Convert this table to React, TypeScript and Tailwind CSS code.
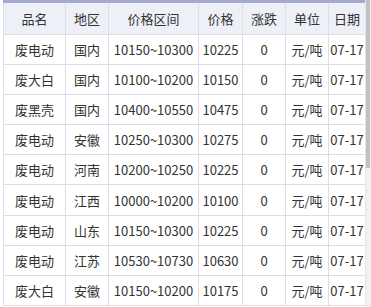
import React from 'react';

const cols = [
  { key: 'name', label: '品名', w: 'w-[62px]' },
  { key: 'area', label: '地区', w: 'w-[43px]' },
  { key: 'range', label: '价格区间', w: 'w-[90px]' },
  { key: 'price', label: '价格', w: 'w-[44px]' },
  { key: 'change', label: '涨跌', w: 'w-[43px]' },
  { key: 'unit', label: '单位', w: 'w-[43px]' },
  { key: 'date', label: '日期', w: 'w-[37px]' },
];

const rows = [
  ['废电动', '国内', '10150~10300', '10225', '0', '元/吨', '07-17'],
  ['废大白', '国内', '10100~10200', '10150', '0', '元/吨', '07-17'],
  ['废黑壳', '国内', '10400~10550', '10475', '0', '元/吨', '07-17'],
  ['废电动', '安徽', '10250~10300', '10275', '0', '元/吨', '07-17'],
  ['废电动', '河南', '10200~10250', '10225', '0', '元/吨', '07-17'],
  ['废电动', '江西', '10000~10200', '10100', '0', '元/吨', '07-17'],
  ['废电动', '山东', '10150~10300', '10225', '0', '元/吨', '07-17'],
  ['废电动', '江苏', '10530~10730', '10630', '0', '元/吨', '07-17'],
  ['废大白', '安徽', '10150~10200', '10175', '0', '元/吨', '07-17'],
];

export default function App() {
  return (
    <div
      className="flex w-[371px] h-[307px] overflow-hidden bg-white text-[13px] text-[#333]"
      style={{ fontFamily: '"Noto Sans CJK SC", "Noto Sans", sans-serif' }}
    >
      <div className="w-[365px] pl-[3px] shrink-0">
        <div className="border-t-[3px] border-[#a5aad4]">
          <table className="table-fixed border-collapse w-[362px]">
            <thead>
              <tr className="bg-[#eef0f8] h-[31px]">
                {cols.map((c) => (
                  <th
                    key={c.key}
                    className={`${c.w} border border-t-0 border-[#dcdde9] font-normal text-center p-0 leading-none`}
                  >
                    {c.label}
                  </th>
                ))}
              </tr>
            </thead>
            <tbody>
              {rows.map((r, i) => (
                <tr key={i} className="h-[30.2px]">
                  {r.map((v, j) => (
                    <td
                      key={j}
                      className="border border-[#dcdde9] text-center p-0 leading-none whitespace-nowrap"
                    >
                      {v}
                    </td>
                  ))}
                </tr>
              ))}
            </tbody>
          </table>
        </div>
      </div>
      <div className="w-[6px] h-full bg-[#f1f1f1] border-l border-[#e6e6e6] flex">
        <div className="w-[4px] h-[168px] bg-[#c1c1c1]" />
      </div>
    </div>
  );
}
